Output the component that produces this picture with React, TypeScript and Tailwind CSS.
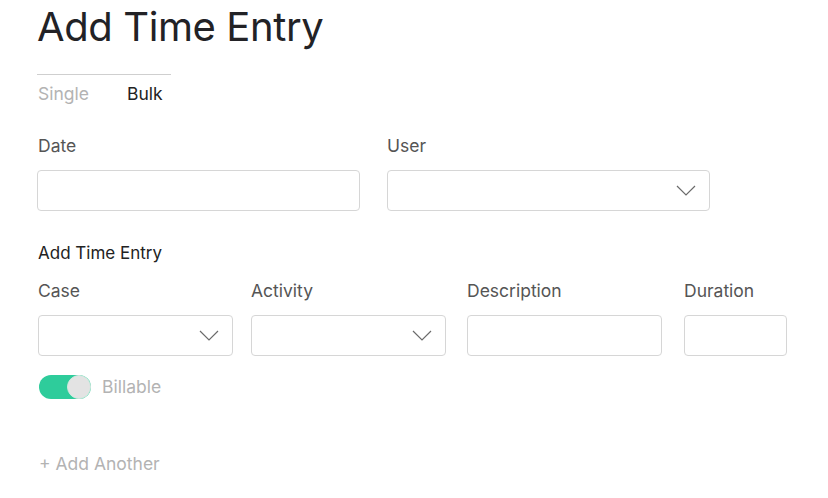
import React from 'react';

const Chevron = () => (
  <svg width="20" height="11" viewBox="0 0 20 11" fill="none" className="shrink-0">
    <path d="M1 1l9 9 9-9" stroke="#6b6b6b" strokeWidth="1.2" />
  </svg>
);

const TextBox: React.FC<{ className: string }> = ({ className }) => (
  <div className={`h-[41px] rounded-[4px] border border-[#d6d6d6] bg-white ${className}`} />
);

const SelectBox: React.FC<{ className: string }> = ({ className }) => (
  <div className={`flex h-[41px] items-center justify-end rounded-[4px] border border-[#d6d6d6] bg-white pr-[13px] ${className}`}>
    <Chevron />
  </div>
);

export default function App() {
  return (
    <div className="h-[498px] w-[828px] bg-white pl-[37px] text-[#555] [font-family:Inter,'Liberation_Sans',sans-serif]">
      <h1 className="pt-[4px] text-[40px] leading-[46px] tracking-[-0.4px] text-[#222226]">Add Time Entry</h1>

      <div className="mt-[24px] w-[134px] border-t border-[#cfcfcf]" />
      <div className="flex gap-[38px] pl-[1px] pt-[9px] text-[17.5px] leading-[20px]">
        <span className="text-[#b3b3b3]">Single</span>
        <span className="text-[#222]">Bulk</span>
      </div>

      <div className="mt-[32px] flex gap-[27px]">
        <div className="flex w-[323px] flex-col">
          <label className="pl-[1px] text-[17.5px] leading-[20px]">Date</label>
          <TextBox className="mt-[14px] w-[323px]" />
        </div>
        <div className="flex w-[323px] flex-col">
          <label className="text-[17.5px] leading-[20px]">User</label>
          <SelectBox className="mt-[14px] w-[323px]" />
        </div>
      </div>

      <div className="mt-[32px] pl-[1px] text-[17px] leading-[20px] text-[#222]">Add Time Entry</div>

      <div className="mt-[18px] flex pl-[1px]">
        <div className="flex w-[213px] flex-col">
          <label className="text-[17.5px] leading-[20px]">Case</label>
          <SelectBox className="mt-[14px] w-[195px]" />
        </div>
        <div className="flex w-[216px] flex-col">
          <label className="text-[17.5px] leading-[20px]">Activity</label>
          <SelectBox className="mt-[14px] w-[195px]" />
        </div>
        <div className="flex w-[217px] flex-col">
          <label className="text-[17.5px] leading-[20px]">Description</label>
          <TextBox className="mt-[14px] w-[195px]" />
        </div>
        <div className="flex w-[103px] flex-col">
          <label className="text-[17.5px] leading-[20px]">Duration</label>
          <TextBox className="mt-[14px] w-[103px]" />
        </div>
      </div>

      <div className="mt-[19px] flex items-center gap-[11px] pl-[2px]">
        <div className="flex h-[24px] w-[52px] items-center justify-end rounded-full bg-[#2ecc9b]">
          <div className="h-[24px] w-[24px] rounded-full border border-[#cfe9df] bg-[#e3e3e3]" />
        </div>
        <span className="text-[17.5px] leading-[20px] text-[#b3b3b3]">Billable</span>
      </div>

      <div className="mt-[55px] pl-[2px] text-[17.5px] leading-[20px] text-[#b3b3b3]">+ Add Another</div>
    </div>
  );
}
